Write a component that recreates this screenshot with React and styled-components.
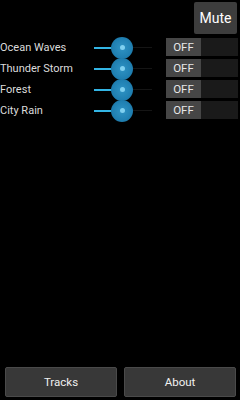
import React from 'react';
import styled, { createGlobalStyle } from 'styled-components';

const GlobalStyle = createGlobalStyle`
  html, body {
    margin: 0;
    padding: 0;
    background: #000;
  }
  body {
    font-family: Roboto, "Noto Sans", sans-serif;
  }
`;

const Screen = styled.div`
  width: 240px;
  height: 400px;
  background: #000;
  display: flex;
  flex-direction: column;
  box-sizing: border-box;
`;

const TopBar = styled.div`
  display: flex;
  justify-content: flex-end;
  padding: 2px 3px 0 0;
`;

const MuteButton = styled.button`
  width: 43px;
  height: 32px;
  background: #3d3d3d;
  border: none;
  border-radius: 2px;
  color: #fff;
  font-family: Roboto, sans-serif;
  font-size: 14px;
  padding: 0;
`;

const List = styled.div`
  display: flex;
  flex-direction: column;
  gap: 4px;
  margin-top: 4px;
`;

const Row = styled.div`
  display: grid;
  grid-template-columns: 94px 72px 72px;
  align-items: center;
  height: 17px;
`;

const Label = styled.span`
  color: #dcdcdc;
  font-size: 11px;
  white-space: nowrap;
`;

const Slider = styled.div`
  position: relative;
  height: 17px;
`;

const Track = styled.div`
  position: absolute;
  left: 0;
  top: 8px;
  width: ${p => p.$value}px;
  height: 2px;
  background: #33b5e5;
`;

const Rest = styled.div`
  position: absolute;
  left: ${p => p.$value}px;
  top: 8px;
  width: 30px;
  height: 1px;
  background: #151515;
`;

const Thumb = styled.div`
  position: absolute;
  left: ${p => p.$value - 11}px;
  top: -2px;
  width: 22px;
  height: 22px;
  border-radius: 50%;
  background: radial-gradient(circle, #2f93c4 0%, #2080b2 60%, #186a96 100%);
  display: flex;
  align-items: center;
  justify-content: center;

  &::after {
    content: '';
    width: 5px;
    height: 5px;
    border-radius: 50%;
    background: #7fd0f0;
  }
`;

const Toggle = styled.div`
  display: flex;
  height: 18px;
  width: 72px;
  background: #1a1a1a;
`;

const ToggleKnob = styled.div`
  width: 35px;
  height: 100%;
  background: #464646;
  color: #e6e6e6;
  font-size: 11.5px;
  display: flex;
  align-items: center;
  justify-content: center;
`;

const Spacer = styled.div`
  flex: 1;
`;

const BottomBar = styled.div`
  display: grid;
  grid-template-columns: 1fr 1fr;
  gap: 7px;
  padding: 0 4px 3px 5px;
`;

const NavButton = styled.button`
  height: 30px;
  background: #383838;
  border: 1px solid #4a4a4a;
  border-radius: 2px;
  color: #f0f0f0;
  font-family: Roboto, sans-serif;
  font-size: 11.5px;
  padding: 0;
`;

const sounds = ['Ocean Waves', 'Thunder Storm', 'Forest', 'City Rain'];

export default function App() {
  return (
    <>
      <GlobalStyle />
      <Screen>
        <TopBar>
          <MuteButton>Mute</MuteButton>
        </TopBar>
        <List>
          {sounds.map(name => (
            <Row key={name}>
              <Label>{name}</Label>
              <Slider>
                <Track $value={28} />
                <Rest $value={28} />
                <Thumb $value={28} />
              </Slider>
              <Toggle>
                <ToggleKnob>OFF</ToggleKnob>
              </Toggle>
            </Row>
          ))}
        </List>
        <Spacer />
        <BottomBar>
          <NavButton>Tracks</NavButton>
          <NavButton>About</NavButton>
        </BottomBar>
      </Screen>
    </>
  );
}
